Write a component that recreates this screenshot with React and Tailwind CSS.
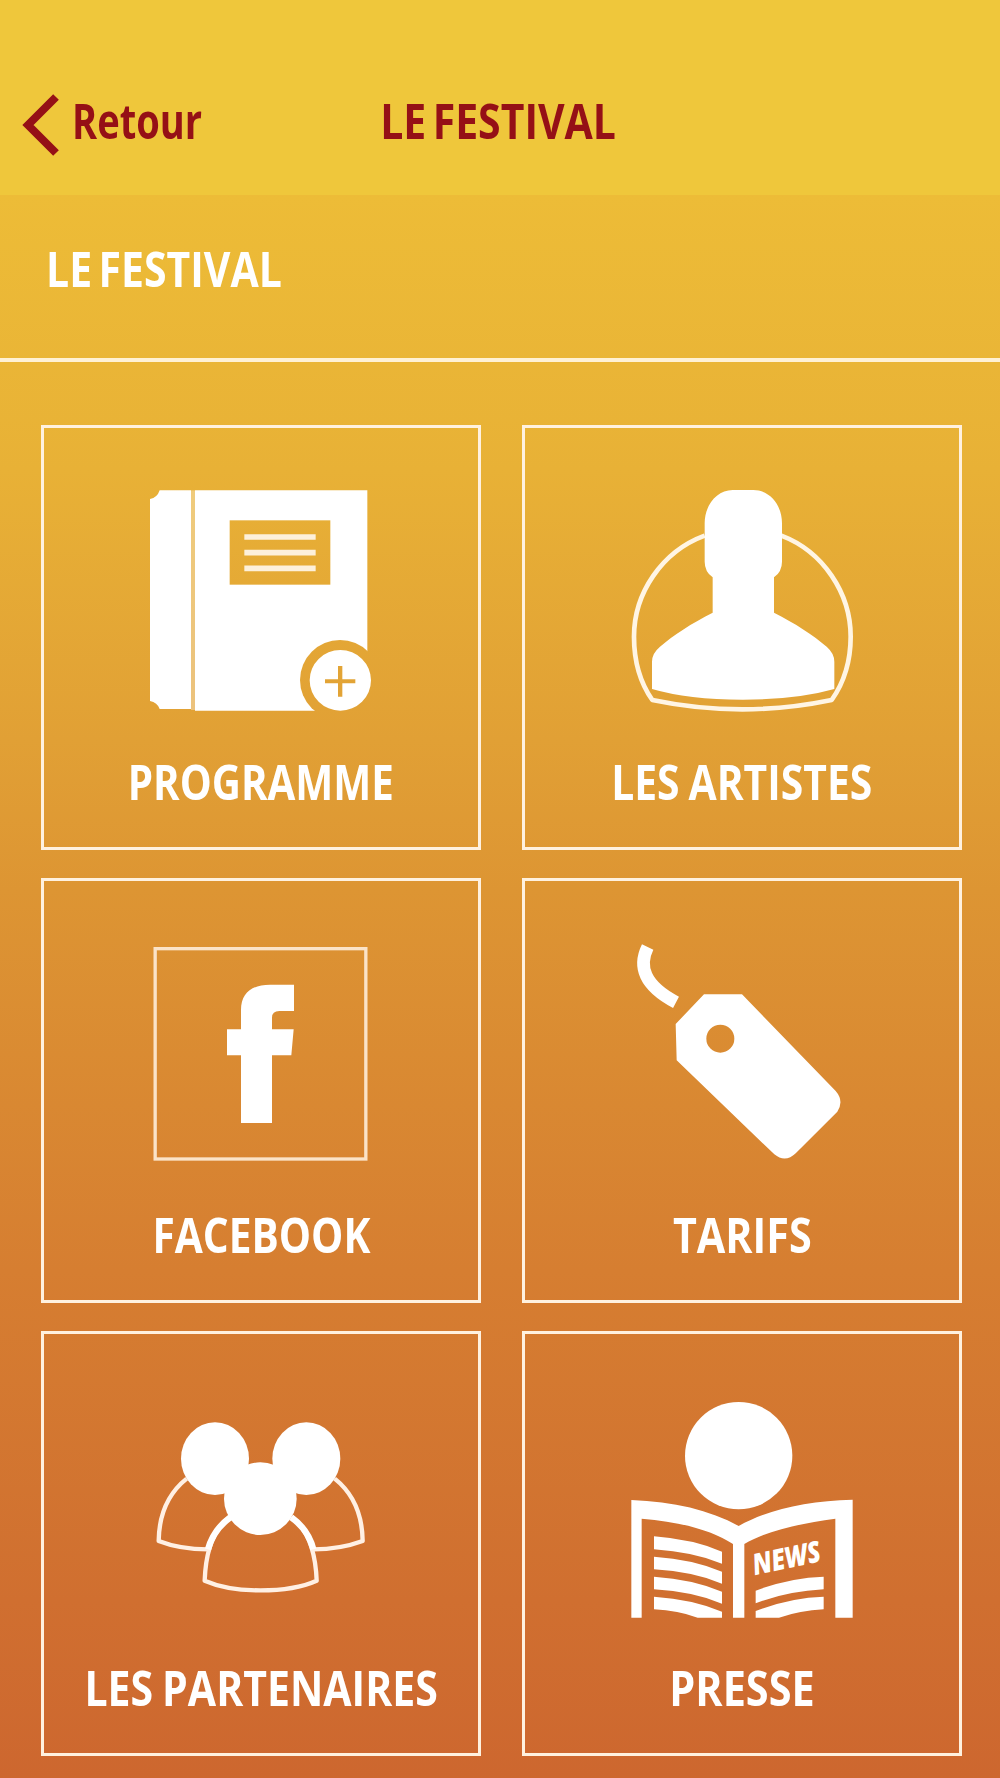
import React from "react";

const ProgrammeIcon = () => (
  <svg viewBox="3 0 780 780" className="h-[260px] w-[260px] fill-white">
    <mask id="book">
      <rect width="780" height="780" fill="white" />
      <rect x="299" y="151" width="302" height="193" fill="black" />
      <circle cx="630" cy="630" r="120" fill="black" />
    </mask>
    <g mask="url(#book)">
      <path d="M89 61H183V717H89Q82 697 60 693V87Q82 83 89 61Z" />
      <path d="M195 61H712V640L640 722H195Z" />
    </g>
    <path d="M189 61V720" stroke="white" strokeWidth="12" opacity="0.35" />
    <g stroke="#fdf0da" strokeWidth="17">
      <path d="M343 201H557M343 248H557M343 295H557" />
    </g>
    <path
      fillRule="evenodd"
      d="M631 540a92 91 0 1 1 0 182a92 91 0 1 1 0 -182ZM624 588V628H585V640H624V680H637V640H676V628H637V588Z"
    />
  </svg>
);

const ArtistesIcon = () => (
  <svg viewBox="6 0 780 780" className="h-[260px] w-[260px] fill-white">
    <path
      d="M284 197C155 245 72 370 72 500C72 575 92 640 127 690Q260 718 397 718Q530 718 665 690C700 640 722 575 722 500C722 370 640 245 514 197"
      fill="none"
      stroke="#fff5e4"
      strokeWidth="14"
      strokeLinejoin="round"
    />
    <path d="M368 60H430C480 60 516 106 516 160V275Q516 305 492 322V428C555 460 610 495 650 530Q673 550 673 575V657Q560 689 398 689Q235 689 126 657V575Q126 550 150 530C190 495 245 460 308 428V322Q284 305 284 275V160C284 106 320 60 368 60Z" />
  </svg>
);

const FacebookIcon = () => (
  <svg viewBox="3 -21 780 780" className="h-[260px] w-[260px] fill-white">
    <rect x="75.5" y="56" width="632" height="631" fill="none" stroke="#fbe3c8" strokeWidth="10" />
    <path d="M492 164V243H448Q426 243 426 263V298H491L484 376H426V579H333V376H291V298H333V240C333 190 365 164 420 164Z" />
  </svg>
);

const TarifsIcon = () => (
  <svg viewBox="6 -21 780 780" className="h-[260px] w-[260px] fill-white">
    <path d="M113 51C84 110 103 167 198 217" fill="none" stroke="white" strokeWidth="38" />
    <path
      fillRule="evenodd"
      d="M282 193H396L677 483Q703 513 682 545L558 669Q526 700 493 673L200 391L197 282ZM331 284a42 42 0 1 0 0 84a42 42 0 1 0 0 -84Z"
    />
  </svg>
);

const PartenairesIcon = () => (
  <svg viewBox="3 -42 780 780" className="h-[260px] w-[260px] fill-white">
    <g fill="none" stroke="#fff0e4" strokeWidth="13" strokeLinejoin="round">
      <path d="M170 266C115 310 87 375 86 453Q150 478 234 478" />
      <path d="M614 266C669 310 697 375 698 453Q630 478 550 478" />
      <path d="M300 380C245 420 227 490 224 572Q290 601 391 601Q495 601 560 572C557 490 535 420 485 380" />
    </g>
    <g fill="none" stroke="white" strokeWidth="19">
      <path d="M301 382C265 408 245 438 234 478M484 382C520 408 540 438 550 478" />
    </g>
    <ellipse cx="255" cy="206" rx="102" ry="109" />
    <ellipse cx="529" cy="206" rx="102" ry="109" />
    <ellipse cx="391" cy="326" rx="109" ry="109" />
  </svg>
);

const PresseIcon = () => (
  <svg viewBox="6 -42 780 780" className="h-[260px] w-[260px] fill-white">
    <circle cx="386" cy="197" r="161" />
    <path d="M64 330C190 335 300 360 386 408C470 360 590 332 728 329V683H676V386C570 400 465 424 403 462V683H369V462C310 424 220 396 95 386V683H64Z" />
    <path d="M132 439Q250 448 336 485V521Q250 486 132 478Z" />
    <path d="M132 500Q250 508 336 545V581Q250 545 132 538Z" />
    <path d="M132 560Q250 568 336 605V641Q250 605 132 598Z" />
    <path d="M132 620Q250 628 336 665V683H263Q205 662 132 658Z" />
    <path d="M437 602Q540 563 641 560V598Q530 604 437 640Z" />
    <path d="M437 663Q540 623 641 620V658Q570 662 507 683H437Z" />
    <text
      transform="translate(434 556) rotate(-12)"
      textLength="208"
      lengthAdjust="spacingAndGlyphs"
      className="font-['Open_Sans'] text-[88px] font-extrabold italic"
    >
      NEWS
    </text>
  </svg>
);

const tiles = [
  { label: "PROGRAMME", Icon: ProgrammeIcon, fit: "scale-x-[0.822]" },
  { label: "LES ARTISTES", Icon: ArtistesIcon, fit: "scale-x-[0.833]" },
  { label: "FACEBOOK", Icon: FacebookIcon, fit: "scale-x-[0.829]" },
  { label: "TARIFS", Icon: TarifsIcon, fit: "scale-x-[0.843]" },
  { label: "LES PARTENAIRES", Icon: PartenairesIcon, fit: "scale-x-[0.837]" },
  { label: "PRESSE", Icon: PresseIcon, fit: "scale-x-[0.845]" },
];

const Tile = ({ label, Icon, fit }) => (
  <button className="flex h-[425px] flex-col items-center border-[3px] border-[#fff1df] pt-[42px] [word-spacing:-2px]">
    <Icon />
    <span className={`mt-[16px] whitespace-nowrap ${fit}`}>{label}</span>
  </button>
);

const App = () => {
  return (
    <div className="flex h-[1778px] w-[1000px] flex-col overflow-hidden bg-[linear-gradient(to_bottom,#edbc37_195px,#e8b136_470px,#e1a035_740px,#dd9533_890px,#d67e31_1270px,#d06f30_1600px,#cd672f_1778px)] font-['Open_Sans','Noto_Sans',sans-serif] text-[49px] leading-[70px] font-bold text-white [word-spacing:-5px]">
      {/* Top bar */}
      <header className="grid h-[195px] grid-cols-[1fr_auto_1fr] items-start bg-[#efc73b] pt-[85px] pr-[3px] text-[#951016]">
        <button className="flex items-start pl-[21px]">
          <svg viewBox="0 0 40 66" className="mt-[7px] h-[66px] w-[40px]" fill="none" stroke="currentColor" strokeWidth="8">
            <path d="M35 5L7 33L35 61" />
          </svg>
          <span className="ml-[11px] origin-left scale-x-[0.777]">Retour</span>
        </button>
        <h1 className="scale-x-[0.836] whitespace-nowrap">LE FESTIVAL</h1>
      </header>

      {/* Section title */}
      <div className="h-[167px] border-b-4 border-[#fff1d4] pt-[38px] pl-[46px]">
        <h2 className="inline-block origin-left scale-x-[0.836]">LE FESTIVAL</h2>
      </div>

      <main className="grid grid-cols-2 gap-x-[41px] gap-y-[28px] pt-[63px] pr-[38px] pl-[41px]">
        {tiles.map((tile) => (
          <Tile key={tile.label} {...tile} />
        ))}
      </main>
    </div>
  );
};

export default App;
